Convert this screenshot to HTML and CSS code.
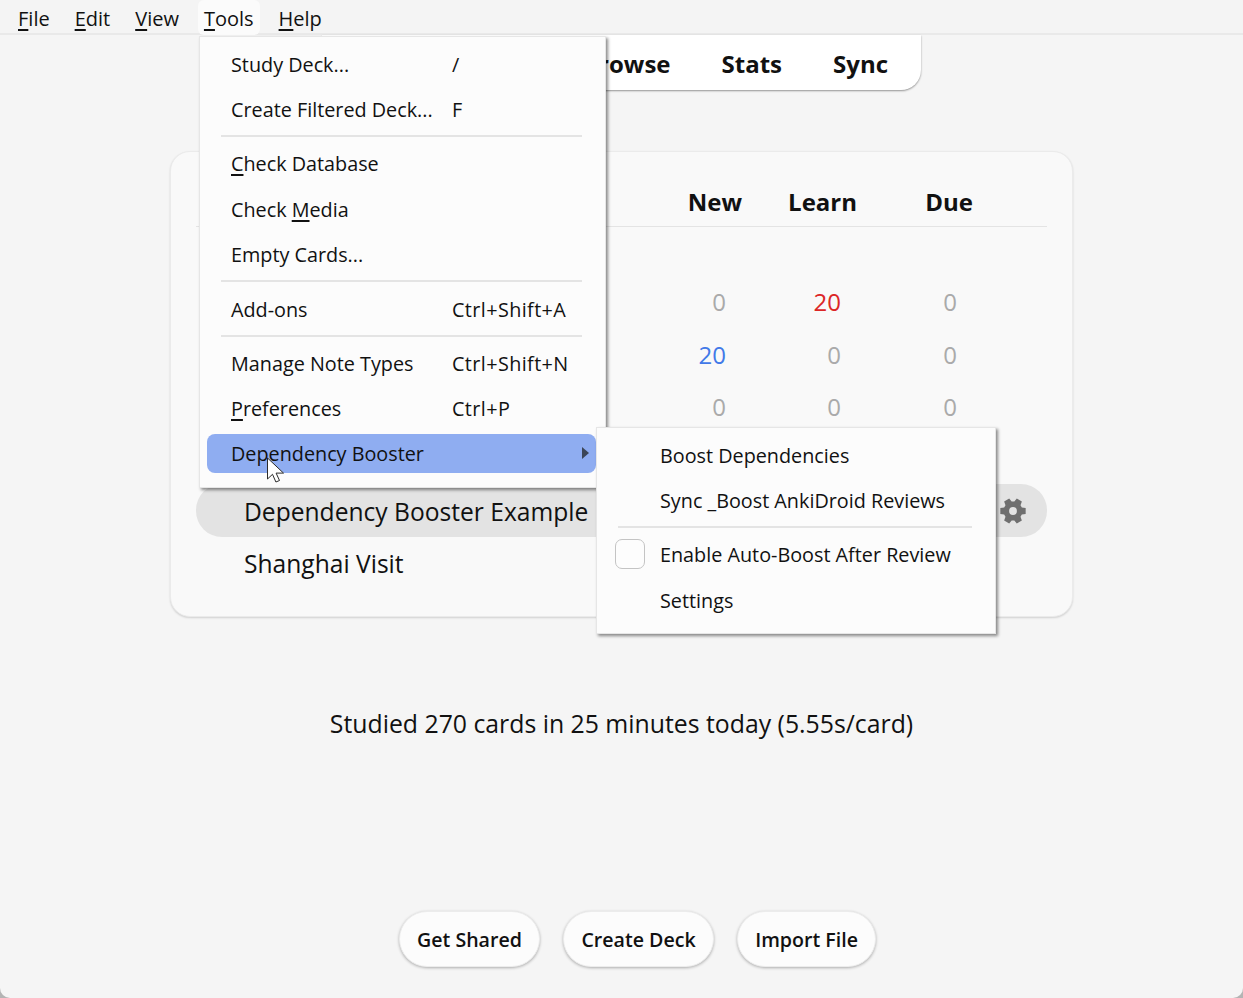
FILE: index.html
```html
<!DOCTYPE html>
<html lang="en">
<head>
  <meta charset="UTF-8">
  <meta name="viewport" content="width=device-width,initial-scale=1">
  <title>Anki</title>
  <link rel="stylesheet" href="styles.css">
</head>
<body>
  <nav class="menubar">
    <span class="menubar-item"><u>F</u>ile</span>
    <span class="menubar-item"><u>E</u>dit</span>
    <span class="menubar-item"><u>V</u>iew</span>
    <span class="menubar-item active"><u>T</u>ools</span>
    <span class="menubar-item"><u>H</u>elp</span>
  </nav>

  <main class="page">
    <div class="toolbar">
      <span>Browse</span><span>Stats</span><span>Sync</span>
    </div>

    <section class="card">
      <div class="deck-head">
        <span></span><span class="num">New</span><span class="num">Learn</span><span class="num">Due</span>
      </div>
      <div class="deck-row first">
        <span></span><span class="num grey">0</span><span class="num red">20</span><span class="num grey">0</span><span></span>
      </div>
      <div class="deck-row">
        <span></span><span class="num blue">20</span><span class="num grey">0</span><span class="num grey">0</span><span></span>
      </div>
      <div class="deck-row">
        <span></span><span class="num grey">0</span><span class="num grey">0</span><span class="num grey">0</span><span></span>
      </div>
      <div class="deck-row spacer"></div>
      <div class="deck-row selected">
        <span class="deck-name">Dependency Booster Example</span><span></span><span></span><span></span>
        <span class="gear">
          <svg width="26" height="26" viewBox="0 0 24 24"><path fill="#6f6f6f" fill-rule="evenodd" d="M20.160 8.700L23.690 9.300V14.700L20.160 15.300 18.930 17.420 20.180 20.770 15.510 23.470 13.220 20.710H10.780L8.490 23.470 3.820 20.770 5.070 17.420 3.840 15.300 .31 14.700V9.300L3.840 8.700 5.070 6.580 3.820 3.230 8.490 .53 10.780 3.290H13.220L15.510 .53 20.180 3.230 18.930 6.580zM12 8.400a3.600 3.600 0 1 0 0 7.200 3.600 3.600 0 0 0 0-7.200z"/></svg>
        </span>
      </div>
      <div class="deck-row">
        <span class="deck-name">Shanghai Visit</span>
      </div>
    </section>

    <p class="stats">Studied 270 cards in 25 minutes today (5.55s/card)</p>

    <div class="actions">
      <button class="pill">Get Shared</button>
      <button class="pill">Create Deck</button>
      <button class="pill">Import File</button>
    </div>
  </main>

  <!-- popups sit over the page -->
  <div class="menu tools-menu">
    <div class="menu-item"><span class="label">Study Deck...</span><span>/</span></div>
    <div class="menu-item"><span class="label">Create Filtered Deck...</span><span>F</span></div>
    <hr class="sep">
    <div class="menu-item"><span class="label"><u>C</u>heck Database</span></div>
    <div class="menu-item"><span class="label">Check <u>M</u>edia</span></div>
    <div class="menu-item"><span class="label">Empty Cards...</span></div>
    <hr class="sep">
    <div class="menu-item"><span class="label">Add-ons</span><span class="key">Ctrl+Shift+A</span></div>
    <hr class="sep">
    <div class="menu-item"><span class="label">Manage Note Types</span><span class="key">Ctrl+Shift+N</span></div>
    <div class="menu-item"><span class="label"><u>P</u>references</span><span class="key">Ctrl+P</span></div>
    <div class="menu-item current"><span class="label">Dependency Booster</span><i class="arrow"></i></div>
  </div>

  <div class="menu sub-menu">
    <div class="menu-item"><span>Boost Dependencies</span></div>
    <div class="menu-item"><span>Sync _Boost AnkiDroid Reviews</span></div>
    <hr class="sep">
    <div class="menu-item"><i class="check"></i><span>Enable Auto-Boost After Review</span></div>
    <div class="menu-item"><span>Settings</span></div>
  </div>

  <svg class="cursor" width="20" height="27" viewBox="0 0 20 27"><path fill="#fff" stroke="#2b2b2b" stroke-width="1" stroke-linejoin="round" d="M1.500 1v21l5-4.700 3.400 7.700 3.600-1.500-3.400-7.400h7.400z"/></svg>
</body>
</html>
```

FILE: styles.css
```css
* { box-sizing: border-box; }
html { height: 100%; background: #b4b4b4; }
body {
  height: 100%;
  margin: 0;
  background: #f5f5f5;
  color: #111;
  font-family: "Open Sans", "Noto Sans", sans-serif;
  display: flex; flex-direction: column;
  overflow: hidden;
  border-radius: 0 0 10px 10px;
}
u { text-underline-offset: 3px; text-decoration-thickness: 1.5px; }

.menubar {
  height: 35px; flex: none;
  display: flex; padding-left: 5.500px;
  background: #f4f4f4;
  border-bottom: 2px solid #e9e9e9;
  font-size: 20px; line-height: 37px;
}
.menubar-item { margin: 0 6.500px; padding: 0 6px; height: 35px; }
.menubar-item.active { background: #fbfbfb; border-radius: 6px; }

.page { flex: 1; display: flex; flex-direction: column; align-items: center; }

.toolbar {
  width: 599px; height: 55px;
  display: flex; justify-content: flex-end; align-items: center; gap: 51px;
  padding: 2px 33px 0 0;
  background: #fff;
  border-radius: 0 0 20px 20px;
  box-shadow: 0 1px 2px rgba(0,0,0,.4);
  font-size: 24px; font-weight: 700;
}

.card {
  width: 903px; height: 466px; margin-top: 61px;
  padding: 26px 25px 0;
  background: #f9f9f9;
  border: 1px solid #ebebeb;
  border-radius: 20px;
  box-shadow: 0 1px 2px rgba(0,0,0,.15);
}
.deck-head {
  display: grid; grid-template-columns: 1fr 115px 115px 116px;
  height: 49px; padding-right: 74px;
  border-bottom: 1px solid #e4e4e4;
  font-size: 24px; font-weight: 700; line-height: 48px;
}
.deck-row {
  display: grid; grid-template-columns: 1fr 115px 115px 116px 90px;
  align-items: center;
  height: 52.500px;
  font-size: 24px;
}
.deck-row.first { margin-top: 48.500px; }
.deck-row.spacer { height: 51px; }
.deck-row.selected { height: 53px; background: #e3e3e3; border-radius: 26px; }
.deck-name { padding: 1px 0 0 48px; font-size: 24.600px; grid-column: 1; }
.gear { display: flex; justify-content: flex-end; padding-right: 21px; }
.num { text-align: right; }
.grey { color: #aaa; }
.red { color: #dc2626; }
.blue { color: #4279e8; }

.stats { margin: 88px 0 0; font-size: 24.800px; line-height: 36px; }

.actions { margin: auto 0 31px 32px; display: flex; gap: 23.500px; }
.pill {
  height: 56px; padding: 0 17px;
  background: #fcfcfc; color: #111;
  border: 1px solid #ececec; border-radius: 28px;
  box-shadow: 0 1px 3px rgba(0,0,0,.3);
  font: 600 19.600px "Open Sans", sans-serif;
}

.menu {
  position: absolute;
  background: #fcfcfc;
  border: 1px solid #e6e6e6;
  box-shadow: 2px 2px 3px rgba(0,0,0,.45);
  font-size: 19.800px;
}
.tools-menu { left: 199px; top: 36px; width: 407px; height: 452px; padding: 4.500px 9px 0 7px; }
.sub-menu { left: 596px; top: 427px; width: 400px; height: 207px; padding: 4.500px 9px 0 7px; }
.menu-item {
  position: relative;
  display: flex; align-items: center;
  height: 45.400px; padding-left: 24px;
  white-space: nowrap;
}
.menu-item .label { width: 221px; flex: none; }
.key { letter-spacing: .4px; }
.sub-menu .menu-item { padding-left: 56px; }
.menu-item.current { height: 39px; margin-top: 2.500px; width: 389px; background: #8fadf1; border-radius: 8px; }
.sep { height: 2px; margin: 3px 14px 4px; border: 0; background: #e4e4e4; }
.arrow {
  position: absolute; right: 7px; top: 13px;
  border-left: 7px solid #3c4658; border-top: 6.500px solid transparent; border-bottom: 6.500px solid transparent;
}
.check {
  position: absolute; left: 11px; top: 6.500px;
  width: 30px; height: 30px;
  background: #fdfdfd; border: 1px solid #c4c4c4; border-radius: 7px;
}
.cursor { position: absolute; left: 266px; top: 457px; }
```
